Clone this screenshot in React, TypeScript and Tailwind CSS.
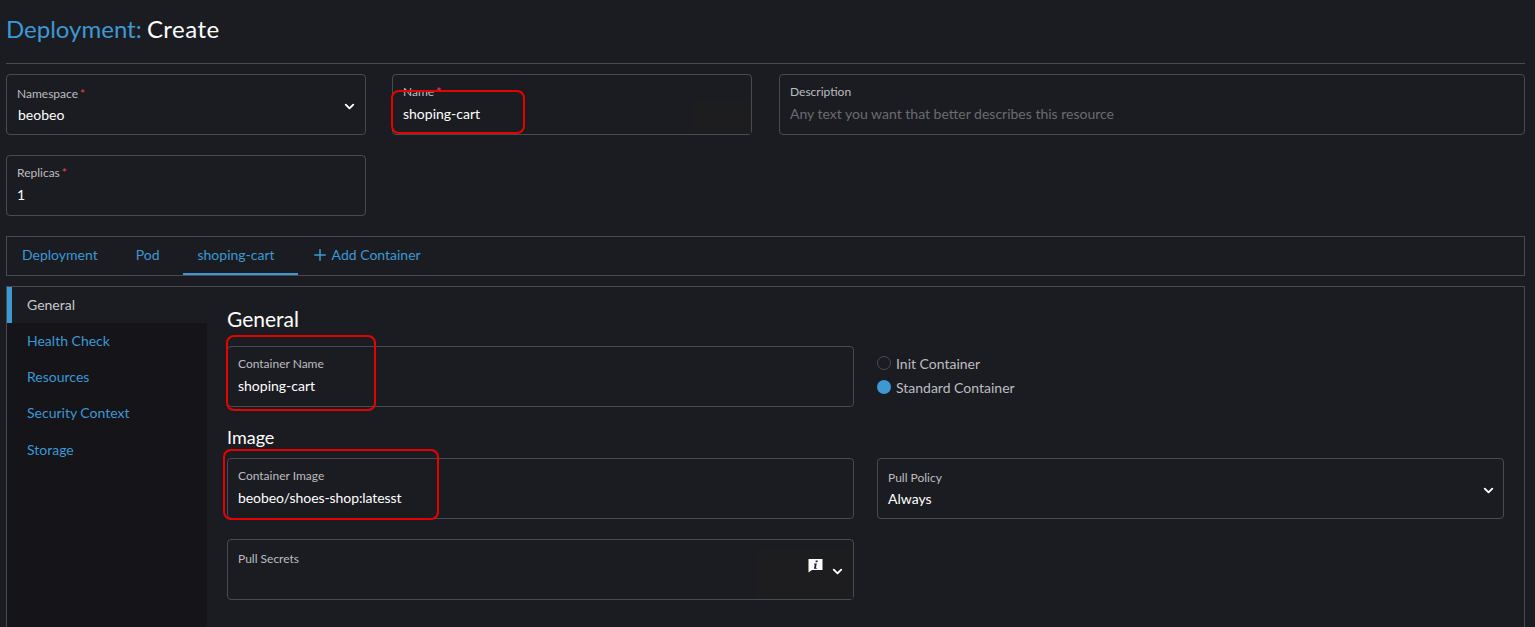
import React from "react";
import { ChevronDown, Plus } from "lucide-react";

function Field({ label, value, required, placeholder, chevron, select, className = "", children, valueClass = "", chevronClass = "right-[7px]" }: { label: string; value?: string; required?: boolean; placeholder?: string; chevron?: boolean; select?: boolean; className?: string; children?: React.ReactNode; valueClass?: string; chevronClass?: string }) {
  return (
    <div className={`relative h-[61px] rounded border border-[#4a4b50] px-[10px] ${select ? "pt-[10px]" : "pt-[8px]"} ${className}`}>
      {children}
      <div className="relative text-[12px] leading-[18px] text-[#bcbcc0]">
        {label}
        {required && <span className="ml-[2px] text-[#e5484d]">*</span>}
      </div>
      {value && <div className={`relative text-[14px] leading-[22px] text-white ${select ? "mt-[1px]" : "mt-[2px]"} ${valueClass}`}>{value}</div>}
      {placeholder && <div className="relative mt-[2px] text-[14px] leading-[22px] text-[#6a6b70]">{placeholder}</div>}
      {chevron && <ChevronDown className={`absolute top-[24px] text-white ${chevronClass}`} size={15} strokeWidth={3} />}
    </div>
  );
}

function RedMark({ className }: { className: string }) {
  return <div className={`pointer-events-none absolute z-10 rounded-lg border-2 border-[#e60000] ${className}`} />;
}

export default function App() {
  return (
    <div className="h-[627px] w-[1535px] overflow-hidden bg-[#1b1c21] pl-[6px] pr-[10px] font-['Lato',sans-serif]">
      <h1 className="h-[64px] border-b border-[#4a4b50] pt-[13px] text-[24px] leading-[32px] text-white">
        <span className="text-[#3d98d3]">Deployment:</span> <span className="-ml-px tracking-[0.5px]">Create</span>
      </h1>

      <div className="mt-[10px] flex">
        <Field label="Namespace" required select value="beobeo" chevron chevronClass="right-[8px]" className="w-[360px]" valueClass="pl-px" />
        <Field label="Name" required value="shoping-cart" className="ml-[26px] w-[360px]" valueClass="-mt-[1px]">
          <div className="absolute bottom-0 right-0 top-[26px] w-[60px] bg-[#1d1d1f]" />
          <RedMark className="-left-[2px] top-[15px] h-[44px] w-[134px]" />
        </Field>
        <Field label="Description" placeholder="Any text you want that better describes this resource" className="ml-[27px] flex-1" />
      </div>

      <Field label="Replicas" required value="1" className="mt-[20px] w-[360px]" />

      <div className="mt-[20px] flex h-[40px] items-stretch border border-[#4a4b50] text-[14px] text-[#3d98d3]">
        <div className="flex items-center px-[15px] pb-[3px]">Deployment</div>
        <div className="ml-[8px] flex items-center px-[15px] pb-[3px]">Pod</div>
        <div className="ml-[8px] flex items-center border-b-2 border-[#3d98d3] pb-[1px] pl-[15px] pr-[23px]">shoping-cart</div>
        <div className="flex items-center gap-[3px] pb-[3px] pl-[13px]">
          <Plus size={18} strokeWidth={2} />
          Add Container
        </div>
      </div>

      <div className="mt-[10px] flex h-[400px] border border-[#4a4b50]">
        <div className="w-[200px] shrink-0 bg-[#141419] text-[14px] text-[#3d98d3]">
          <div className="flex h-[36px] items-center border-l-[5px] border-[#3d98d3] bg-[#1b1c21] pb-[2px] pl-[15px] text-[#c8c8cb]">General</div>
          <div className="flex h-[36px] items-center pb-[2px] pl-[20px]">Health Check</div>
          <div className="flex h-[36px] items-center pb-[2px] pl-[20px]">Resources</div>
          <div className="flex h-[36px] items-center pb-[2px] pl-[20px]">Security Context</div>
          <div className="flex h-[38px] items-center pb-[2px] pl-[20px]">Storage</div>
        </div>

        <div className="flex-1 pl-[20px] pr-[20px]">
          <h2 className="h-[59px] pt-[18px] text-[21px] leading-[28px] text-white">General</h2>
          <div className="flex">
            <Field label="Container Name" value="shoping-cart" className="w-[627px]">
              <RedMark className="-left-[2px] -top-[12px] h-[76px] w-[150px]" />
            </Field>
            <div className="ml-[23px] pt-[5px] text-[14px] text-[#bcbcc0]">
              <label className="flex h-[24px] items-center gap-[5px]">
                <span className="h-[14px] w-[14px] rounded-full border border-[#4a4b50]" />
                Init Container
              </label>
              <label className="flex h-[24px] items-center gap-[5px]">
                <span className="h-[14px] w-[14px] rounded-full bg-[#3d98d3]" />
                Standard Container
              </label>
            </div>
          </div>

          <h3 className="h-[51px] pt-[18px] text-[18px] leading-[24px] text-white">Image</h3>
          <div className="flex">
            <Field label="Container Image" value="beobeo/shoes-shop:latesst" className="w-[627px]" valueClass="tracking-[-0.08px]">
              <RedMark className="-left-[5px] -top-[10px] h-[71px] w-[216px]" />
            </Field>
            <Field label="Pull Policy" select value="Always" chevron className="ml-[23px] w-[627px]" />
          </div>

          <Field label="Pull Secrets" select className="mt-[20px] w-[627px]">
            <div className="absolute bottom-0 right-0 top-[8px] w-[98px] bg-[#1d1d1f]" />
            <svg className="absolute right-[30px] top-[18px]" width="15" height="15" viewBox="0 0 15 15" aria-hidden="true">
              <path d="M0.5 1h14v11H4l-3.5 2.5z" fill="#fff" />
              <path d="M7.6 2.6h2v1.6h-2zM6.2 5.4h2.6l-.9 4.4h.9v1H5.9l.9-4.4h-.8z" fill="#14213d" />
            </svg>
            <ChevronDown className="absolute right-[8px] top-[24px] text-white" size={15} strokeWidth={3} />
          </Field>
        </div>
      </div>
    </div>
  );
}
